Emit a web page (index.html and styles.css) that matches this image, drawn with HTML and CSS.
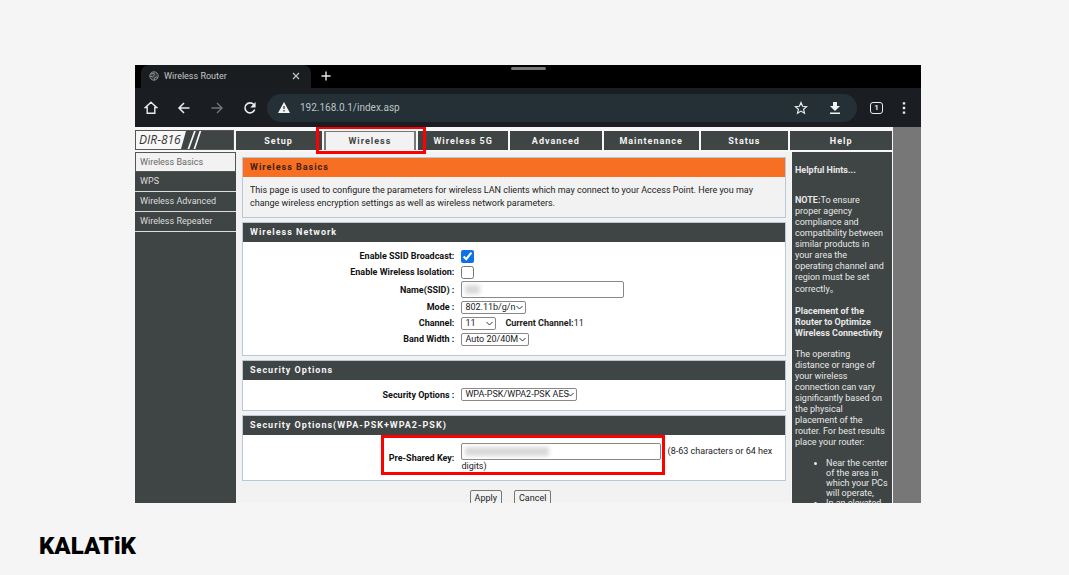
FILE: index.html
```html
<!DOCTYPE html>
<html lang="en">
<head>
<meta charset="utf-8">
<title>Wireless Router</title>
<link rel="stylesheet" href="styles.css">
</head>
<body>
<main class="device">
  <div class="tabstrip">
    <div class="tab">
      <svg class="globe" viewBox="0 0 10 10"><circle cx="5" cy="5" r="4.2" fill="#33393c" stroke="#858b8e"/><path d="M1.500 3.200 5 2.200 5.500 4 3.500 5.800 1 5M5.500 9 5.300 7 7.200 6 9 6.300" fill="none" stroke="#858b8e"/></svg>
      <span class="tab-title">Wireless Router</span>
      <button class="icon-btn close" aria-label="Close tab"><svg viewBox="0 0 8 8" width="8" height="8"><path d="M1 1l6 6M7 1l-6 6" stroke="#c5c9cb" stroke-width="1.1"/></svg></button>
    </div>
    <button class="icon-btn plus" aria-label="New tab"><svg viewBox="0 0 10 10" width="10" height="10"><path d="M5 0.5v9M0.5 5h9" stroke="#e8e8e8" stroke-width="1.4"/></svg></button>
    <span class="handle"></span>
  </div>
  <div class="toolbar">
    <button class="icon-btn" aria-label="Home"><svg viewBox="0 0 14 14"><path d="M7 1.3 12.6 6.5H10.8V12.2H3.2V6.5H1.4Z" fill="none" stroke="#e9ebec" stroke-width="1.4"/></svg></button>
    <button class="icon-btn" aria-label="Back"><svg viewBox="0 0 14 14"><path d="M12.5 7H2M7 2 2 7l5 5" fill="none" stroke="#e9ebec" stroke-width="1.5"/></svg></button>
    <button class="icon-btn" aria-label="Forward"><svg viewBox="0 0 14 14"><path d="M1.5 7H12M7 2l5 5-5 5" fill="none" stroke="#70767a" stroke-width="1.4"/></svg></button>
    <button class="icon-btn" aria-label="Reload"><svg viewBox="0 0 14 14"><path d="M11.7 8.5A5 5 0 1 1 10.8 3.6" fill="none" stroke="#e9ebec" stroke-width="1.6"/><path d="M12.6 1v5.4H7.2Z" fill="#e9ebec"/></svg></button>
    <div class="address">
      <svg class="warn" viewBox="0 0 12 11"><path d="M6 0 12 11H0Z" fill="#f1f3f3"/><path d="M6 4v3M6 8v1.4" stroke="#243036" stroke-width="1.2"/></svg>
      <span class="url">192.168.0.1/index.asp</span>
      <button class="icon-btn star" aria-label="Bookmark"><svg viewBox="0 0 14 14"><path d="M7 1.6 8.6 5.3 12.6 5.7 9.6 8.3 10.5 12.2 7 10.1 3.5 12.2 4.4 8.3 1.4 5.7 5.4 5.3Z" fill="none" stroke="#e9ebec" stroke-width="1.2"/></svg></button>
      <button class="icon-btn" aria-label="Download"><svg viewBox="0 0 14 14"><path d="M5 1h4v4h3L7 10 2 5h3ZM2 11.4h10v1.6H2Z" fill="#f1f3f3"/></svg></button>
    </div>
    <button class="icon-btn tabs-count" aria-label="Open tabs">1</button>
    <button class="icon-btn" aria-label="Menu"><svg viewBox="0 0 14 14"><path d="M5.8 1.2h2.4v2.4H5.8ZM5.8 5.8h2.4v2.4H5.8ZM5.8 10.4h2.4v2.4H5.8Z" fill="#e9ebec"/></svg></button>
  </div>
  <div class="viewport">
    <div class="page">
      <nav class="topnav">
        <div class="model"><span>DIR-816</span><svg viewBox="0 0 24 18" width="24" height="18"><path d="M0 0H5L0 18Z" fill="#f7f7f7"/><path d="M13 0h1.800L8.300 18H6.500ZM18.500 0h1.800L14.300 18H12.500Z" fill="#f7f7f7"/></svg></div>
        <a href="#">Setup</a>
        <a href="#" class="current">Wireless<i class="mark mark-tab"></i></a>
        <a href="#">Wireless 5G</a>
        <a href="#">Advanced</a>
        <a href="#">Maintenance</a>
        <a href="#">Status</a>
        <a href="#">Help</a>
      </nav>
      <div class="columns">
        <nav class="sidenav">
          <a href="#" class="current">Wireless Basics</a>
          <a href="#">WPS</a>
          <a href="#">Wireless Advanced</a>
          <a href="#">Wireless Repeater</a>
        </nav>
        <form class="content">
          <section class="card intro">
            <h1>Wireless Basics</h1>
            <p>This page is used to configure the parameters for wireless LAN clients which may connect to your Access Point. Here you may change wireless encryption settings as well as wireless network parameters.</p>
          </section>
          <section class="card">
            <h2>Wireless Network</h2>
            <div class="fields network">
              <label for="bc">Enable SSID Broadcast:</label><div><input type="checkbox" id="bc" checked></div>
              <label for="iso">Enable Wireless Isolation:</label><div><input type="checkbox" id="iso"></div>
              <label for="ssid">Name(SSID) :</label><div class="hidden-value short"><input type="text" id="ssid" class="ssid"></div>
              <label for="mode">Mode :</label><div><select id="mode" class="w-mode"><option>802.11b/g/n</option></select></div>
              <label for="ch">Channel:</label><div><select id="ch" class="w-channel"><option>11</option></select><span class="now"><b>Current Channel:</b>11</span></div>
              <label for="bw">Band Width :</label><div><select id="bw" class="w-band"><option>Auto 20/40M</option></select></div>
            </div>
          </section>
          <section class="card">
            <h2>Security Options</h2>
            <div class="fields security">
              <label for="sec">Security Options :</label><div><select id="sec" class="w-security"><option>WPA-PSK/WPA2-PSK AES</option></select></div>
            </div>
          </section>
          <section class="card">
            <h2>Security Options(WPA-PSK+WPA2-PSK)</h2>
            <div class="fields key">
              <label for="psk">Pre-Shared Key:</label><div class="hidden-value long"><input type="text" id="psk" class="psk"> <span class="hint">(8-63 characters or 64 hex digits)</span><i class="mark mark-key"></i></div>
            </div>
          </section>
          <div class="actions"><button type="button">Apply</button><button type="button">Cancel</button></div>
        </form>
        <aside class="help">
          <h3>Helpful Hints...</h3>
          <p><b>NOTE:</b>To ensure proper agency compliance and compatibility between similar products in your area the operating channel and region must be set <span class="last">correctly。</span></p>
          <h3>Placement of the Router to Optimize Wireless Connectivity</h3>
          <p>The operating distance or range of your wireless connection can vary significantly based on the physical placement of the router. For best results place your router:</p>
          <ul><li>Near the center of the area in which your PCs will operate,</li><li>In an elevated</li></ul>
        </aside>
      </div>
    </div>
  </div>
</main>
<footer class="brand">KALATiK</footer>
</body>
</html>
```
FILE: styles.css
```css
* { box-sizing: border-box; }
body {
  margin: 0;
  height: 100vh;
  display: flex;
  flex-direction: column;
  padding: 65px 148px 0 135px;
  background: #f5f5f5;
  font: 9px/12px Roboto, "Noto Sans", "Noto Sans CJK SC", sans-serif;
  color: #222;
}
h1, h2, h3, p, ul { margin: 0; }
a { text-decoration: none; }
button, input, select { font: inherit; color: inherit; margin: 0; }

.device {
  flex: 1;
  min-height: 0;
  display: flex;
  flex-direction: column;
  overflow: hidden;
  background: #1a1d21;
}

/* Browser chrome */
.tabstrip {
  position: relative;
  display: flex;
  height: 23px;
  flex: none;
  background: #000;
}
.tab {
  display: flex;
  align-items: center;
  width: 170px;
  margin-left: 6px;
  padding: 0 11px 2px 8px;
  border-radius: 8px 8px 0 0;
  background: #191d20;
  color: #c4c7c9;
}
.globe { width: 10px; height: 10px; margin-right: 5px; }
.tab-title { flex: 1; }
.icon-btn {
  display: flex;
  align-items: center;
  justify-content: center;
  padding: 0;
  border: 0;
  background: none;
}
.icon-btn svg { display: block; }
.plus { margin-left: 10px; padding-bottom: 2px; }
.handle {
  position: absolute;
  top: 2px;
  left: 50%;
  width: 35px;
  height: 3px;
  margin-left: -17px;
  border-radius: 2px;
  background: #777;
}
.toolbar {
  display: flex;
  align-items: center;
  flex: none;
  gap: 19px;
  height: 39px;
  padding: 0 10px 0 9px;
}
.toolbar .icon-btn svg { width: 14px; height: 14px; }
.address {
  flex: 1;
  display: flex;
  align-items: center;
  height: 28px;
  margin-left: -9px;
  padding: 0 15px 0 11px;
  border-radius: 14px;
  background: #243036;
}
.warn { width: 12px; height: 11px; }
.url { flex: 1; margin-left: 10px; font-size: 10px; color: #bcc3c6; }
.star { margin-right: 20px; }
.toolbar .tabs-count {
  width: 13px;
  height: 12px;
  margin: 0 -5px 0 -6px;
  border: 1px solid #e9ebec;
  border-radius: 3px;
  color: #e9ebec;
  font-size: 8px;
  font-weight: 700;
  line-height: 10px;
}

/* Router admin page */
.viewport {
  flex: 1;
  min-height: 0;
  overflow: hidden;
  padding-right: 28px;
  background: #777;
}
.page {
  display: flex;
  flex-direction: column;
  height: 100%;
  padding-top: 3px;
  background: #f7f7f7;
}
.topnav {
  display: grid;
  grid-template-columns: 99fr 86fr 93fr 90fr 92fr 95fr 88fr 102fr;
  gap: 2px;
  height: 20px;
  flex: none;
  padding-right: 1px;
}
.topnav a {
  position: relative;
  display: flex;
  align-items: center;
  justify-content: center;
  margin-top: 1px;
  padding-top: 1px;
  background: #3f4444;
  color: #f3f3f3;
  font-weight: 700;
  letter-spacing: 1px;
}
.topnav a.current {
  background: #f2f2f2;
  border: 1px solid #777;
  border-width: 1px 2px 0;
  padding-top: 0;
  color: #444;
}
.model {
  display: flex;
  border: 1px solid #555;
  background: #3f4444;
}
.model span {
  padding-left: 3px;
  background: #f7f7f7;
  color: #333;
  font: italic 500 12px/17px "Open Sans", "Noto Sans", sans-serif;
}
.mark {
  position: absolute;
  border: 3px solid #f00;
  z-index: 2;
}
.mark-tab { inset: -6px -12px -4px -10px; }
.columns {
  display: grid;
  grid-template-columns: 101fr 555fr 102fr;
  flex: 1;
  min-height: 0;
  padding-top: 2px;
}
.sidenav { background: #3f4444; }
.sidenav a {
  display: block;
  height: 20px;
  padding: 3px 5px;
  border-bottom: 1px solid #ddd;
  color: #ddd;
}
.sidenav a.current {
  padding: 3px 4px;
  border: 1px solid #555;
  background: #f2f2f2;
  color: #666;
}
.content {
  min-width: 0;
  padding: 5px 5px 0 6px;
  background: #f2f2f2;
}
.card {
  margin-bottom: 4px;
  border: 1px solid #b9c8d8;
  background: #fff;
}
.card h1, .card h2 {
  padding: 3px 7px 4px;
  background: #3f4444;
  color: #f5f5f5;
  font-size: 9px;
  font-weight: 700;
  line-height: 12px;
  letter-spacing: 1px;
}
.card.intro { background: #f2f2f2; }
.card h1 { background: #f76f22; color: #402010; }
.intro p { padding: 7px 7px; line-height: 13px; }
.fields {
  display: grid;
  grid-template-columns: 39% 1fr;
  column-gap: 7px;
  align-items: center;
}
.fields label { text-align: right; font-weight: 700; color: #111; }
.fields > div { display: flex; align-items: center; }
.network { grid-template-rows: 16px 16px 19px 16px 16px 16px; padding: 6px 0 8px; }
.security { padding: 8px 0 9px; }
.key { padding: 8px 0 8px; }
.fields .long { display: block; padding-right: 8px; line-height: 12px; }
.hidden-value { position: relative; }
.hidden-value::after {
  content: "";
  position: absolute;
  top: 4px;
  left: 4px;
  width: 15px;
  height: 9px;
  background: #d8d8d8;
  filter: blur(2px);
}
.long::after { width: 84px; }
input[type="text"] {
  height: 17px;
  border: 1px solid #888;
  border-radius: 2px;
  background: #fff;
  vertical-align: middle;
}
.ssid { width: 163px; }
.psk { width: 200px; margin-right: 4px; }
.mark-key { inset: -8px 120px -3px -80px; }
input[type="checkbox"] { width: 13px; height: 13px; accent-color: #0b72e8; }
select {
  appearance: none;
  height: 13px;
  padding: 0 3px;
  border: 1px solid #888;
  border-radius: 2px;
  background: #fff url("data:image/svg+xml,%3Csvg xmlns='http://www.w3.org/2000/svg' width='7' height='5'%3E%3Cpath d='M.5 1l3 3 3-3' fill='none' stroke='%23333'/%3E%3C/svg%3E") no-repeat right 2px center;
  line-height: 11px;
}
.w-mode { width: 65px; }
.w-channel { width: 35px; }
.w-band { width: 68px; }
.w-security { width: 116px; }
.now { margin-left: 9px; }
.actions {
  display: flex;
  justify-content: center;
  gap: 12px;
  padding: 5px 7px 0 0;
}
.actions button {
  height: 16px;
  padding: 0 4px;
  border: 1px solid #777;
  border-radius: 2px;
  background: #f2f2f2;
}
.help {
  min-width: 0;
  margin: 0 1px;
  padding: 13px 0 0 3px;
  background: #3f4444;
  color: #e8e8e8;
  line-height: 11px;
}
.help h3 { font-size: 9px; font-weight: 700; margin-bottom: 10px; }
.help h3:first-child { margin-bottom: 19px; }
.help p { margin-bottom: 10px; padding-right: 6px; }
.last { display: block; line-height: 13px; }
.help ul { padding-left: 31px; line-height: 10px; }

.brand {
  height: 72px;
  flex: none;
  margin-left: -96px;
  padding-top: 31px;
  color: #000;
  font-size: 24px;
  font-weight: 900;
  line-height: 24px;
}
```
